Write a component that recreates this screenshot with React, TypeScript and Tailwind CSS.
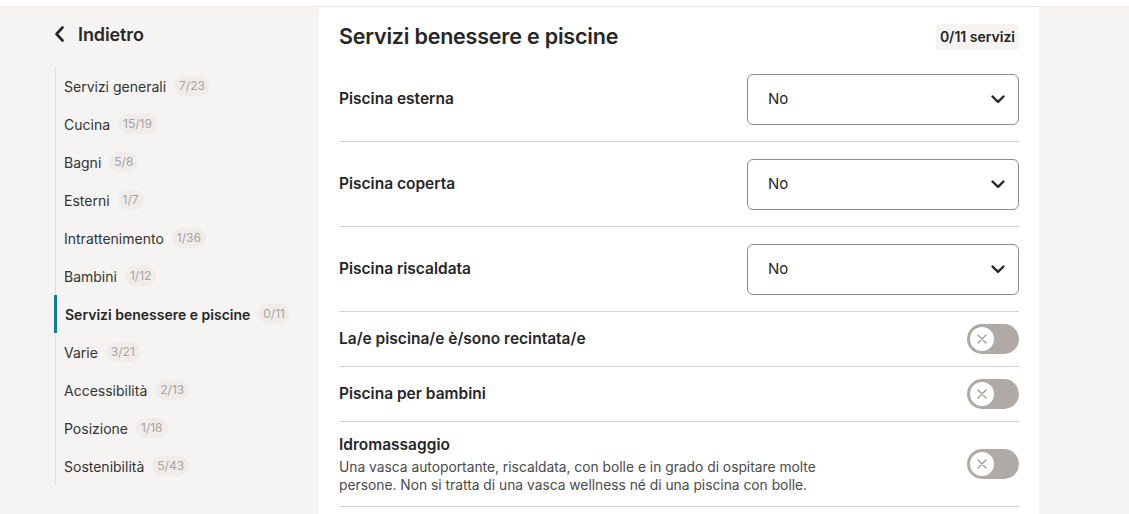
const sections = [
  { name: "Servizi generali", count: "7/23" },
  { name: "Cucina", count: "15/19" },
  { name: "Bagni", count: "5/8" },
  { name: "Esterni", count: "1/7" },
  { name: "Intrattenimento", count: "1/36" },
  { name: "Bambini", count: "1/12" },
  { name: "Servizi benessere e piscine", count: "0/11", active: true },
  { name: "Varie", count: "3/21" },
  { name: "Accessibilità", count: "2/13" },
  { name: "Posizione", count: "1/18" },
  { name: "Sostenibilità", count: "5/43" },
];

const SelectBox = () => (
  <div className="w-[272px] h-[51px] rounded-[6px] border border-[#8f8b87] flex items-center justify-between pl-5 pr-[12px] text-[15px] text-[#262626]">
    <span>No</span>
    <svg width="16" height="16" viewBox="0 0 16 16" fill="none">
      <path d="M2.5 5.5 8 10.8l5.5-5.3" stroke="#262626" strokeWidth="2.4" strokeLinecap="round" strokeLinejoin="round" />
    </svg>
  </div>
);

const Toggle = () => (
  <div className="w-[52px] h-[30px] rounded-full bg-[#afaaa6] flex items-center pl-[3px]">
    <div className="w-[24px] h-[24px] rounded-full bg-white flex items-center justify-center">
      <svg width="12" height="12" viewBox="0 0 12 12">
        <path d="M2 2l8 8M10 2l-8 8" stroke="#a19c98" strokeWidth="1.4" strokeLinecap="round" />
      </svg>
    </div>
  </div>
);

export default function App() {
  return (
    <div className="w-[1129px] h-[514px] overflow-hidden bg-[#f5f4f2] text-[#262626]" style={{ fontFamily: "Inter, 'Noto Sans', sans-serif" }}>
      <div className="h-[7px] bg-white border-b border-[#ebe8e5]" />
      <div className="flex h-[507px]">
        {/* Sidebar */}
        <aside className="w-[319px] pl-[55px] pt-[16px]">
          <div className="flex items-center gap-[14px] h-[22px]">
            <svg width="9" height="16" viewBox="0 0 9 16" fill="none">
              <path d="M7.5 1.5 1.5 8l6 6.5" stroke="#262626" strokeWidth="2.6" strokeLinecap="round" strokeLinejoin="round" />
            </svg>
            <span className="text-[18px] font-semibold tracking-[-0.1px]">Indietro</span>
          </div>
          <nav className="mt-[22px] border-l border-[#e2dfdc] w-[250px]">
            {sections.map((s) => (
              <div
                key={s.name}
                className={
                  "h-[38px] flex items-center gap-[8px] text-[14px] " +
                  (s.active ? "border-l-[3px] border-[#0d7e93] -ml-[2px] pl-[8px] font-semibold" : "pl-[8px] text-[#333]")
                }
              >
                <span>{s.name}</span>
                <span className="px-[5px] h-[20px] leading-[20px] rounded-full bg-[#efecea] text-[12px] font-normal text-[#a8a39f]">
                  {s.count}
                </span>
              </div>
            ))}
          </nav>
        </aside>

        {/* Main */}
        <main className="w-[720px] bg-white px-[20px]">
          <div className="flex items-center justify-between h-[50px] pt-[9px]">
            <h1 className="text-[21.5px] font-semibold tracking-[-0.2px]">Servizi benessere e piscine</h1>
            <span className="bg-[#f5f4f2] rounded-[4px] px-[4px] h-[26px] leading-[26px] text-[14px] font-semibold text-[#222]">0/11 servizi</span>
          </div>

          {["Piscina esterna", "Piscina coperta", "Piscina riscaldata"].map((l) => (
            <div key={l} className="flex items-center justify-between h-[85px] border-b border-[#d6d1cd]">
              <span className="text-[15.5px] font-semibold">{l}</span>
              <SelectBox />
            </div>
          ))}

          {["La/e piscina/e è/sono recintata/e", "Piscina per bambini"].map((l) => (
            <div key={l} className="flex items-center justify-between h-[55px] border-b border-[#d6d1cd]">
              <span className="text-[15.5px] font-semibold">{l}</span>
              <Toggle />
            </div>
          ))}

          <div className="flex items-center justify-between h-[85px] border-b border-[#d6d1cd]">
            <div>
              <div className="text-[15.5px] font-semibold leading-[20px]">Idromassaggio</div>
              <p className="mt-[3px] w-[500px] text-[13.8px] leading-[18px] text-[#4a4a4a]">
                Una vasca autoportante, riscaldata, con bolle e in grado di ospitare molte persone. Non si tratta di una vasca wellness né di una piscina con bolle.
              </p>
            </div>
            <Toggle />
          </div>
        </main>
      </div>
    </div>
  );
}
